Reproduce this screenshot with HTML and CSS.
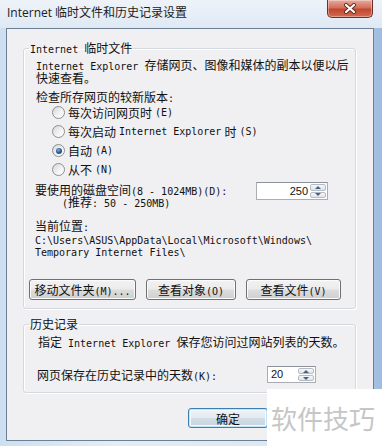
FILE: index.html
```html
<!doctype html>
<html lang="zh-CN">
    <head>
        <meta charset="UTF-8" />
        <meta name="viewport" content="width=device-width, initial-scale=1.0" />
        <title>Internet 临时文件和历史记录设置</title>
        <link rel="stylesheet" href="styles.css">
    </head>
    <body>
        <div class="window">
            <div class="titlebar">
                <span class="title">Internet 临时文件和历史记录设置</span>
                <button class="close" aria-label="关闭">
                    <svg width="14" height="11" viewBox="0 0 14 11">
                        <path d="M3 2 L11 9 M11 2 L3 9" stroke="#5a2a22" stroke-width="4" stroke-linecap="round" />
                        <path d="M3 2 L11 9 M11 2 L3 9" stroke="#ffffff" stroke-width="2.2" stroke-linecap="round" />
                    </svg>
                </button>
            </div>

            <div class="client">
                <fieldset class="group group-cache">
                    <legend><span class="m">Internet </span>临时文件</legend>
                    <p class="desc"><span class="m">Internet Explorer </span>存储网页、图像和媒体的副本以便以后<br>快速查看。</p>
                    <p class="check-title">检查所存网页的较新版本<span class="m">:</span></p>
                    <div class="radios">
                        <label class="radio-row"><span class="radio"></span>每次访问网页时<span class="m">(E)</span></label>
                        <label class="radio-row"><span class="radio"></span>每次启动<span class="m"> Internet Explorer </span>时<span class="m">(S)</span></label>
                        <label class="radio-row"><span class="radio on"></span>自动<span class="m">(A)</span></label>
                        <label class="radio-row"><span class="radio"></span>从不<span class="m">(N)</span></label>
                    </div>
                    <div class="disk-row">
                        <p class="disk-label">
                            要使用的磁盘空间<span class="m">(8 - 1024MB)(D):</span><br>
                            <span class="hint"><span class="m">(</span>推荐<span class="m">: 50 - 250MB)</span></span>
                        </p>
                        <div class="spin spin-disk">
                            <span class="spin-val">250</span>
                            <span class="spin-btns"><span class="up"></span><span class="dn"></span></span>
                        </div>
                    </div>
                    <p class="loc-title">当前位置<span class="m">:</span></p>
                    <p class="path">C:\Users\ASUS\AppData\Local\Microsoft\Windows\<br>Temporary Internet Files\</p>
                    <div class="btn-row">
                        <button class="btn btn-move">移动文件夹<span class="m">(M)...</span></button>
                        <button class="btn btn-objects">查看对象<span class="m">(O)</span></button>
                        <button class="btn btn-files">查看文件<span class="m">(V)</span></button>
                    </div>
                </fieldset>

                <fieldset class="group group-history">
                    <legend>历史记录</legend>
                    <p class="desc2">指定<span class="m"> Internet Explorer </span>保存您访问过网站列表的天数。</p>
                    <div class="days-row">
                        <span class="days-label">网页保存在历史记录中的天数<span class="m">(K):</span></span>
                        <div class="spin spin-days">
                            <span class="spin-val left">20</span>
                            <span class="spin-btns"><span class="up"></span><span class="dn"></span></span>
                        </div>
                    </div>
                </fieldset>

                <div class="dialog-buttons">
                    <button class="btn btn-ok">确定</button>
                </div>
            </div>

            <div class="watermark">软件技巧</div>
        </div>
    </body>
</html>
```

FILE: styles.css
```css
body {
    margin: 0;
    padding: 0;
    font-family: "Noto Sans CJK SC", sans-serif;
    font-size: 12px;
    color: #111;
}
.window {
    position: relative;
    width: 382px;
    height: 446px;
    overflow: hidden;
    background: linear-gradient(90deg, #cddff0 0%, #e4edf6 30%, #dce7f2 75%, #9fbde0 100%);
}
.titlebar {
    height: 28px;
    display: flex;
    align-items: flex-start;
    justify-content: space-between;
    padding: 0 9px 0 7px;
    box-sizing: border-box;
    background: linear-gradient(180deg, #eef3f9 0%, #dfe9f4 100%);
}
.title {
    font-family: "Open Sans", "Noto Sans CJK SC", sans-serif;
    font-size: 12px;
    line-height: 26px;
    color: #1b1b1b;
}
.close {
    width: 46px;
    height: 18px;
    border: 1px solid #6f2f28;
    border-top: none;
    border-radius: 0 0 5px 5px;
    padding: 0;
    display: flex;
    align-items: center;
    justify-content: center;
    background: linear-gradient(180deg, #e9a99b 0%, #d2705d 45%, #c2472f 55%, #d46a50 100%);
    box-shadow: inset 0 0 0 1px rgba(255, 255, 255, 0.35);
}
.client {
    margin-left: 6px;
    width: 368px;
    height: 413px;
    box-sizing: border-box;
    border: 1px solid #6b7f95;
    background: #f0eff1;
    padding-top: 12px;
}
p {
    margin: 0;
}
.m {
    font-family: "DejaVu Sans Mono", monospace;
    font-size: 10px;
    line-height: 0;
}
.group {
    margin: 0 0 0 16px;
    width: 333px;
    box-sizing: border-box;
    border: 1px solid #d3d9de;
    border-radius: 3px;
    box-shadow: inset 1px 1px 0 #fff, 1px 1px 0 #fff;
    min-width: 0;
}
.group legend {
    padding: 0 1px;
    line-height: 14px;
}
.group-cache {
    padding: 0 0 8px 5px;
}
.desc {
    margin-top: 3px;
    padding-left: 7px;
    line-height: 13px;
    white-space: nowrap;
}
.check-title {
    margin-top: 6px;
    padding-left: 7px;
    line-height: 13px;
}
.radios {
    display: flex;
    flex-direction: column;
}
.radio-row {
    display: flex;
    align-items: center;
    height: 19px;
    padding-left: 23px;
    gap: 3px;
    white-space: nowrap;
}
.radio {
    width: 13px;
    height: 13px;
    box-sizing: border-box;
    border-radius: 50%;
    border: 1px solid #8d8f91;
    background: linear-gradient(135deg, #d6d6d6 0%, #f4f4f4 60%, #ffffff 100%);
    display: flex;
    align-items: center;
    justify-content: center;
}
.radio.on::after {
    content: "";
    width: 6px;
    height: 6px;
    border-radius: 50%;
    background: radial-gradient(circle at 40% 35%, #7fb3e3 0%, #2a5b91 50%, #16304f 100%);
}
.disk-row {
    display: flex;
    align-items: flex-start;
    margin-top: 5px;
}
.disk-label {
    flex: 1;
    padding-left: 6px;
    line-height: 12px;
    white-space: nowrap;
}
.hint {
    padding-left: 27px;
}
.spin {
    display: flex;
    height: 18px;
    box-sizing: border-box;
    border: 1px solid #abadb3;
    border-top-color: #8e939b;
    background: #fff;
    font-family: "Liberation Sans", sans-serif;
    font-size: 11px;
}
.spin-disk {
    width: 72px;
    margin-top: -2px;
    margin-right: 27px;
}
.spin-days {
    width: 49px;
    height: 17px;
    margin-left: auto;
    margin-right: 39px;
}
.spin-val {
    flex: 1;
    text-align: right;
    padding-right: 2px;
    line-height: 16px;
}
.spin-val.left {
    text-align: left;
    padding-left: 3px;
    line-height: 15px;
}
.spin-btns {
    width: 16px;
    display: flex;
    flex-direction: column;
    gap: 1px;
    padding: 1px 1px 1px 0;
}
.spin-btns span {
    flex: 1;
    display: flex;
    align-items: center;
    justify-content: center;
    border: 1px solid #b5bcc6;
    border-radius: 2px;
    background: linear-gradient(180deg, #f6f7f9 0%, #dfe3e8 100%);
}
.spin-btns .up::before {
    content: "";
    border-left: 3px solid transparent;
    border-right: 3px solid transparent;
    border-bottom: 3px solid #4c607e;
}
.spin-btns .dn::before {
    content: "";
    border-left: 3px solid transparent;
    border-right: 3px solid transparent;
    border-top: 3px solid #4c607e;
}
.loc-title {
    margin-top: 11px;
    padding-left: 6px;
    line-height: 13px;
}
.path {
    margin-top: 3px;
    padding-left: 6px;
    font-family: "DejaVu Sans Mono", monospace;
    font-size: 10px;
    line-height: 12px;
    white-space: nowrap;
}
.btn-row {
    display: flex;
    gap: 10px;
    margin-top: 20px;
}
.btn {
    height: 21px;
    padding: 0;
    box-sizing: border-box;
    border: 1px solid #707070;
    border-radius: 3px;
    font-family: "Noto Sans CJK SC", sans-serif;
    font-size: 12px;
    color: #111;
    background: linear-gradient(180deg, #f2f2f2 0%, #ebebeb 48%, #dddddd 52%, #cfcfcf 100%);
    box-shadow: inset 0 0 0 1px #fbfbfb;
    white-space: nowrap;
}
.btn-move {
    width: 107px;
}
.btn-objects {
    width: 90px;
}
.btn-files {
    width: 95px;
}
.group-history {
    margin-top: 8px;
    padding: 0 0 9px 5px;
}
.desc2 {
    margin-top: 4px;
    padding-left: 9px;
    line-height: 13px;
    white-space: nowrap;
}
.days-row {
    display: flex;
    align-items: center;
    margin-top: 18px;
    height: 17px;
}
.days-label {
    padding-left: 8px;
    white-space: nowrap;
}
.dialog-buttons {
    display: flex;
    justify-content: flex-end;
    margin-top: 15px;
    padding-right: 105px;
}
.btn-ok {
    width: 80px;
    height: 20px;
    border-color: #3c7fb1;
    background: linear-gradient(180deg, #eef3f7 0%, #e3eaf0 48%, #d3dde6 52%, #c7d3de 100%);
    box-shadow: inset 0 0 0 1px #bfe3f9, inset 0 0 0 2px #f4fbff;
}
.watermark {
    position: absolute;
    left: 267px;
    top: 389px;
    width: 115px;
    height: 57px;
    box-sizing: border-box;
    padding-left: 4px;
    display: flex;
    align-items: center;
    background: #fff;
    color: #c6c6c6;
    font-size: 26px;
    white-space: nowrap;
}
```
